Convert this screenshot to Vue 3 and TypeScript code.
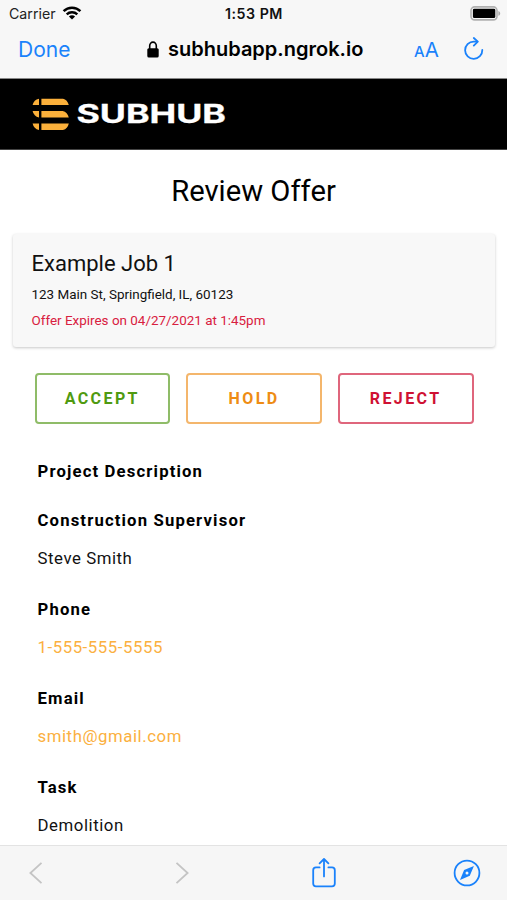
<script setup lang="ts">
interface Action {
  label: string
  tone: string
}
interface Field {
  label: string
  value: string
  href?: string
}

const actions: Action[] = [
  { label: 'ACCEPT', tone: 'accept' },
  { label: 'HOLD', tone: 'hold' },
  { label: 'REJECT', tone: 'reject' },
]

const fields: Field[] = [
  { label: 'Construction Supervisor', value: 'Steve Smith' },
  { label: 'Phone', value: '1-555-555-5555', href: 'tel:1-555-555-5555' },
  { label: 'Email', value: 'smith@gmail.com', href: 'mailto:smith@gmail.com' },
  { label: 'Task', value: 'Demolition' },
]
</script>

<template>
  <div class="screen">
    <header class="chrome">
      <div class="status">
        <div class="carrier">
          <span>Carrier</span>
          <svg width="20" height="14" viewBox="0 0 20 14" fill="none" stroke="#000">
            <path d="M1.6 5.2a12 12 0 0 1 16.8 0" stroke-width="2.5" />
            <path d="M4.7 8.4a7.6 7.6 0 0 1 10.6 0" stroke-width="2.4" />
            <path d="M10 13.6 6.9 10.6a4.4 4.4 0 0 1 6.2 0Z" fill="#000" stroke="none" />
          </svg>
        </div>
        <div class="time">1:53 PM</div>
        <svg class="battery" width="32" height="16" viewBox="0 0 32 16">
          <rect x="1" y="0.9" width="26" height="13" rx="3.6" fill="#f7f7f7" stroke="#b0b0b0" stroke-width="1.6" />
          <rect x="2.9" y="2.7" width="22.4" height="9.4" rx="1.4" fill="#000" />
          <path d="M28.4 5c2.4.8 2.4 4 0 4.8Z" fill="#aaa" />
        </svg>
      </div>
      <div class="address-bar">
        <a class="done">Done</a>
        <div class="url">
          <svg width="12" height="17" viewBox="0 0 12 17">
            <rect x="0.3" y="7.2" width="11.4" height="9.3" rx="1.5" fill="#000" />
            <path d="M2.7 8V4.8a3.3 3.7 0 0 1 6.6 0V8" fill="none" stroke="#000" stroke-width="1.6" />
          </svg>
          <span>subhubapp.ngrok.io</span>
        </div>
        <div class="tools">
          <span class="text-size"><small>A</small>A</span>
          <svg width="20" height="24" viewBox="0 0 20 24" fill="none" stroke="#1a82fb" stroke-width="1.8" stroke-linecap="round" stroke-linejoin="round">
            <path d="M18.3 13a8.6 8.6 0 1 1-8.6-8.4h3.6" />
            <path d="M9.8 1 13.8 4.6 9.8 8.6" />
          </svg>
        </div>
      </div>
    </header>

    <div class="brand">
      <svg width="194" height="36" viewBox="0 0 194 36">
        <g fill="#fbb03b">
          <path d="M7 1.7V8H.6Q1.8 2.8 7 1.7ZM9.4 1.7H31Q35.4 2.8 36.8 8H9.4Z" />
          <path d="M7 14v6.6Q1.8 19.4.6 14ZM9.4 14H30.6Q35.6 15.2 36.8 20.6H9.4Z" />
          <path d="M7 26.5V33Q1.8 31.9.6 26.5ZM9.4 26.5H36.8Q35.6 31.9 31 33H9.4Z" />
        </g>
        <text x="44.4" y="26.2" textLength="149.6" lengthAdjust="spacingAndGlyphs" class="wordmark">SUBHUB</text>
      </svg>
    </div>

    <main class="content">
      <h1>Review Offer</h1>
      <section class="card">
        <h2>Example Job 1</h2>
        <p class="place">123 Main St, Springfield, IL, 60123</p>
        <p class="expires">Offer Expires on 04/27/2021 at 1:45pm</p>
      </section>
      <div class="actions">
        <button v-for="a in actions" :key="a.label" :class="a.tone">{{ a.label }}</button>
      </div>
      <h3 class="project">Project Description</h3>
      <dl>
        <div v-for="f in fields" :key="f.label" class="field">
          <dt>{{ f.label }}</dt>
          <dd>
            <a v-if="f.href" :href="f.href">{{ f.value }}</a>
            <template v-else>{{ f.value }}</template>
          </dd>
        </div>
      </dl>
    </main>

    <nav class="toolbar">
      <svg width="14" height="24" viewBox="0 0 14 24" class="arrow"><path d="M12.5 1.8 1.4 12l11.1 10.2" /></svg>
      <svg width="14" height="24" viewBox="0 0 14 24" class="arrow"><path d="M1.5 1.8 12.6 12 1.5 22.2" /></svg>
      <svg width="26" height="32" viewBox="0 0 26 32" class="blue">
        <path d="M8.6 10.4H5a2.8 2.8 0 0 0-2.8 2.8v13.4A2.8 2.8 0 0 0 5 29.4h16a2.8 2.8 0 0 0 2.8-2.8V13.2a2.8 2.8 0 0 0-2.8-2.8h-3.6" />
        <path d="M13 19.4V2.2M8.6 6.4 13 2l4.4 4.4" />
      </svg>
      <svg width="28" height="28" viewBox="0 0 28 28" class="blue">
        <circle cx="14" cy="14" r="12.4" />
        <path d="m20.9 7-4.1 9.8-9.8 4.1 4.1-9.8ZM14 12.5a1.5 1.5 0 1 0 0 3 1.5 1.5 0 0 0 0-3Z" fill="#1a82fb" fill-rule="evenodd" stroke="none" />
      </svg>
    </nav>
  </div>
</template>

<style>
body {
  margin: 0;
  background: #fff;
}
</style>

<style scoped>
.screen {
  width: 507px;
  height: 900px;
  overflow: hidden;
  display: flex;
  flex-direction: column;
  font-family: Roboto, sans-serif;
  color: #111;
}
svg {
  display: block;
  flex: none;
}
.chrome {
  flex: none;
  box-sizing: border-box;
  height: 79px;
  background: #f7f7f7;
  border-bottom: 1px solid #888;
  font-family: Inter, sans-serif;
}
.status {
  display: grid;
  grid-template-columns: 1fr auto 1fr;
  align-items: center;
  height: 27px;
  padding: 0 5px 0 9px;
  font-size: 14.2px;
}
.carrier {
  display: flex;
  align-items: center;
  gap: 6px;
  color: #222;
}
.carrier svg {
  margin-top: -2px;
}
.time {
  margin-left: -3px;
  font-weight: 600;
  font-size: 14.2px;
  letter-spacing: 0.5px;
}
.battery {
  justify-self: end;
}
.address-bar {
  display: grid;
  grid-template-columns: 128px 1fr 122px;
  align-items: center;
  height: 44px;
  padding: 0 0 0 18px;
}
.done {
  color: #1a82fb;
  font-size: 21px;
}
.url {
  display: flex;
  align-items: center;
  gap: 9px;
  margin-left: 1px;
  font-size: 20px;
  font-weight: 600;
  color: #000;
  white-space: nowrap;
}
.tools {
  display: flex;
  align-items: center;
  justify-content: space-between;
  padding: 0 23px 0 29px;
  color: #1a82fb;
}
.text-size {
  font-size: 20.5px;
}
.text-size small {
  font-size: 15px;
  font-weight: 500;
}
.brand {
  flex: none;
  box-sizing: border-box;
  height: 71px;
  padding: 18px 32px 0;
  background: #000;
  border-bottom: 1px solid #444;
}
.wordmark {
  font: 700 25.5px Inter, sans-serif;
  fill: #fff;
  stroke: #fff;
  stroke-width: 0.3px;
}
.content {
  flex: 1;
  min-height: 0;
  overflow: hidden;
}
h1 {
  margin: 24px 0 26px;
  font-size: 29.2px;
  line-height: 34px;
  font-weight: 400;
  text-align: center;
  color: #000;
}
.card {
  box-sizing: border-box;
  height: 113px;
  margin: 0 12px 0 13px;
  padding: 16px 18.5px;
  background: #f8f8f8;
  border-radius: 3px;
  box-shadow: 0 1px 3px rgba(0, 0, 0, 0.22);
}
h2 {
  margin: 0;
  font-size: 22px;
  line-height: 28px;
  font-weight: 400;
}
.card p {
  margin: 0;
  font-size: 13.45px;
  line-height: 26px;
}
.card .place {
  margin-top: 4px;
}
.card .expires {
  color: #d8203f;
}
.actions {
  display: grid;
  grid-template-columns: repeat(3, 1fr);
  gap: 16px;
  margin: 26px 33.5px 0 34.5px;
}
button {
  height: 51px;
  padding: 0;
  border: 2px solid;
  border-radius: 4px;
  background: #fff;
  font: 700 16px Roboto, sans-serif;
  letter-spacing: 2.4px;
}
.accept {
  color: #4f9a10;
  border-color: #8fbc68;
}
.hold {
  color: #ee8c14;
  border-color: #f4b66c;
}
.reject {
  color: #cf1133;
  border-color: #df667c;
}
.project,
dt {
  margin: 0;
  font-size: 16.7px;
  line-height: 22px;
  font-weight: 700;
  letter-spacing: 1.15px;
  color: #000;
}
.project {
  margin: 37px 37.5px 0;
}
dl {
  display: flex;
  flex-direction: column;
  gap: 30px;
  margin: 27px 37.5px 0;
}
dd {
  margin: 15px 0 0;
  font-size: 16.8px;
  line-height: 22px;
  letter-spacing: 0.55px;
}
dd a {
  color: #fbb040;
  text-decoration: none;
}
.toolbar {
  flex: none;
  box-sizing: border-box;
  height: 55px;
  display: grid;
  grid-template-columns: 146px 136px 142px 28px;
  align-items: center;
  padding: 0 0 0 29px;
  background: #f6f6f6;
  border-top: 1px solid #e3e3e3;
}
.arrow {
  fill: none;
  stroke: #c4c4c4;
  stroke-width: 1.8;
}
.blue {
  fill: none;
  stroke: #1a82fb;
  stroke-width: 1.8;
  stroke-linecap: round;
  stroke-linejoin: round;
}
</style>
